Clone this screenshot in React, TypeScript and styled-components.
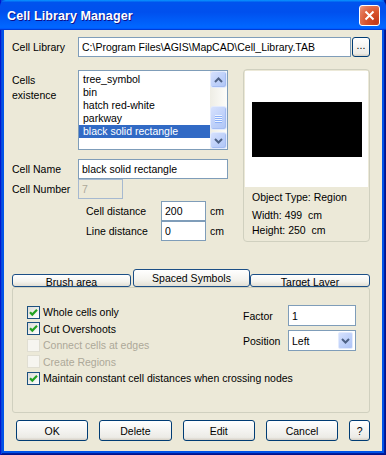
import React from 'react';
import styled, { createGlobalStyle } from 'styled-components';

const GlobalStyle = createGlobalStyle`
  html, body {
    margin: 0;
    padding: 0;
    background: #ffffff;
  }
  body {
    font-family: "Liberation Sans", Arial, sans-serif;
    font-size: 10.5px;
    color: #000000;
  }
`;

const cells = ['tree_symbol', 'bin', 'hatch red-white', 'parkway', 'black solid rectangle'];

const options = [
  { label: 'Whole cells only', checked: true, disabled: false },
  { label: 'Cut Overshoots', checked: true, disabled: false },
  { label: 'Connect cells at edges', checked: false, disabled: true },
  { label: 'Create Regions', checked: false, disabled: true },
];

function Check({ checked, disabled }: { checked: boolean; disabled?: boolean }) {
  return (
    <StCheckBox $disabled={disabled}>
      {checked && (
        <svg width="11" height="11" viewBox="0 0 11 11">
          <path d="M2 5.2 L4.3 7.6 L9 2.8" fill="none" stroke="#21a121" strokeWidth="2.2" />
        </svg>
      )}
    </StCheckBox>
  );
}

function Chevron({ up }: { up?: boolean }) {
  return (
    <svg width="9" height="6" viewBox="0 0 9 6">
      <path
        d={up ? 'M1 5 L4.5 1.5 L8 5' : 'M1 1 L4.5 4.5 L8 1'}
        fill="none"
        stroke="#4d6185"
        strokeWidth="2"
      />
    </svg>
  );
}

export default function App() {
  return (
    <>
      <GlobalStyle />
      <StWindow>
        <StTitleBar>
          <StTitle>Cell Library Manager</StTitle>
          <StClose>
            <svg width="11" height="11" viewBox="0 0 11 11">
              <path d="M1.5 1.5 L9.5 9.5 M9.5 1.5 L1.5 9.5" stroke="#ffffff" strokeWidth="2" />
            </svg>
          </StClose>
        </StTitleBar>

        <StBody>
          <StFieldRow>
            <StLabel $w={66}>Cell Library</StLabel>
            <StTextBox $w={273} defaultValue={'C:\\Program Files\\AGIS\\MapCAD\\Cell_Library.TAB'} />
            <StBrowse>...</StBrowse>
          </StFieldRow>

          <StMain>
            <StLeftCol>
              <StExistRow>
                <StTopLabel>
                  Cells
                  <br />
                  existence
                </StTopLabel>
                <StListBox>
                  <StListItems>
                    {cells.map((c, i) => (
                      <StListItem key={c} $selected={i === cells.length - 1}>
                        {c}
                      </StListItem>
                    ))}
                  </StListItems>
                  <StScrollBar>
                    <StScrollBtn>
                      <Chevron up />
                    </StScrollBtn>
                    <StScrollTrack>
                      <StThumb>
                        <StGrip />
                        <StGrip />
                        <StGrip />
                        <StGrip />
                      </StThumb>
                    </StScrollTrack>
                    <StScrollBtn>
                      <Chevron />
                    </StScrollBtn>
                  </StScrollBar>
                </StListBox>
              </StExistRow>

              <StNameRow>
                <StLabel $w={66}>Cell Name</StLabel>
                <StTextBox $w={150} defaultValue="black solid rectangle" />
              </StNameRow>
              <StFieldRow>
                <StLabel $w={66}>Cell Number</StLabel>
                <StTextBox $w={45} defaultValue="7" disabled />
              </StFieldRow>

              <StDistances>
                <StFieldRow>
                  <StLabel $w={75}>Cell distance</StLabel>
                  <StTextBox $w={45} defaultValue="200" />
                  <StUnit>cm</StUnit>
                </StFieldRow>
                <StFieldRow>
                  <StLabel $w={75}>Line distance</StLabel>
                  <StTextBox $w={45} defaultValue="0" />
                  <StUnit>cm</StUnit>
                </StFieldRow>
              </StDistances>
            </StLeftCol>

            <StPreview>
              <StCanvas>
                <StShape />
              </StCanvas>
              <StInfo>
                <StInfoType>Object Type: Region</StInfoType>
                <StInfoLine>Width: 499&nbsp; cm</StInfoLine>
                <StInfoLine>Height: 250&nbsp; cm</StInfoLine>
              </StInfo>
            </StPreview>
          </StMain>

          <StTabStrip>
            <StTab $w={119}>Brush area</StTab>
            <StTab $w={117} $active>
              Spaced Symbols
            </StTab>
            <StTab $w={120}>Target Layer</StTab>
          </StTabStrip>

          <StTabPanel>
            <StPanelTop>
              <StCheckColumn>
                {options.map((o) => (
                  <StCheckRow key={o.label} $disabled={o.disabled}>
                    <Check checked={o.checked} disabled={o.disabled} />
                    {o.label}
                  </StCheckRow>
                ))}
              </StCheckColumn>
              <StRightFields>
                <StFieldLabel>Factor</StFieldLabel>
                <StTextBox $w={68} $h={21} defaultValue="1" />
                <StFieldLabel>Position</StFieldLabel>
                <StSelect>
                  <StSelectText>Left</StSelectText>
                  <StDropBtn>
                    <Chevron />
                  </StDropBtn>
                </StSelect>
              </StRightFields>
            </StPanelTop>
            <StCheckRow>
              <Check checked />
              Maintain constant cell distances when crossing nodes
            </StCheckRow>
          </StTabPanel>

          <StButtonBar>
            <StPushButton $w={73}>OK</StPushButton>
            <StPushButton $w={73}>Delete</StPushButton>
            <StPushButton $w={73}>Edit</StPushButton>
            <StPushButton $w={73}>Cancel</StPushButton>
            <StPushButton $w={21}>?</StPushButton>
          </StButtonBar>
        </StBody>
      </StWindow>
    </>
  );
}

const StWindow = styled.div`
  width: 386px;
  height: 455px;
  display: flex;
  flex-direction: column;
  background: #0053e8;
  box-shadow: inset 1px 0 #0019cf, inset -1px 0 #00138c, inset 0 -1px #00138c, inset 2px 0 #0a46da,
    inset -2px 0 #001ea0, inset 0 -2px #001ea0;
  box-sizing: border-box;
`;

const StTitleBar = styled.div`
  height: 30px;
  flex: none;
  display: flex;
  align-items: center;
  justify-content: space-between;
  padding: 0 6px 0 7px;
  background: linear-gradient(
    180deg,
    #0997ff,
    #0053ee 8%,
    #0050ee 40%,
    #0066ff 88%,
    #0066ff 93%,
    #005bff 95%,
    #003dd7 96%,
    #003dd7
  );
  border-radius: 6px 6px 0 0;
`;

const StTitle = styled.div`
  color: #ffffff;
  font-weight: bold;
  font-size: 12.5px;
  letter-spacing: 0.1px;
  text-shadow: 1px 1px #0f1089;
  padding-top: 1px;
`;

const StClose = styled.div`
  width: 21px;
  height: 21px;
  box-sizing: border-box;
  display: flex;
  align-items: center;
  justify-content: center;
  border: 1px solid #ffffff;
  border-radius: 3px;
  background: radial-gradient(circle at 85% 85%, #c2391a 0%, #d9532c 45%, #e37a5c 80%, #eea58f 100%);
`;

const StBody = styled.div`
  flex: 1;
  margin: 0 4px 4px;
  padding: 7px 12px 0 8px;
  background: #ece9d8;
  display: flex;
  flex-direction: column;
`;

const StFieldRow = styled.div`
  display: flex;
  align-items: center;
`;

const StNameRow = styled(StFieldRow)`
  margin-top: 9px;
`;

const StLabel = styled.div<{ $w: number }>`
  width: ${(p) => p.$w}px;
  flex: none;
  white-space: nowrap;
`;

const StTopLabel = styled.div`
  width: 66px;
  flex: none;
  line-height: 15px;
  padding-top: 3px;
`;

const StTextBox = styled.input<{ $w: number; $h?: number }>`
  width: ${(p) => p.$w}px;
  height: ${(p) => p.$h ?? 20}px;
  box-sizing: border-box;
  border: 1px solid #7f9db9;
  background: #ffffff;
  padding: 0 3px;
  margin: 0;
  font: inherit;
  color: #000000;
  outline: none;

  &:disabled {
    background: #ece9d8;
    border-color: #a6b9d0;
    color: #aca899;
  }
`;

const StBrowse = styled.button`
  width: 18px;
  height: 20px;
  margin-left: 1px;
  padding: 0 0 3px;
  box-sizing: border-box;
  border: 1px solid #003c74;
  border-radius: 3px;
  background: linear-gradient(180deg, #ffffff, #ecebe6 86%, #d6d0c5);
  font: inherit;
  line-height: 1;
`;

const StMain = styled.div`
  display: flex;
  margin-top: 12px;
`;

const StLeftCol = styled.div`
  width: 216px;
  display: flex;
  flex-direction: column;
`;

const StExistRow = styled.div`
  display: flex;
  margin-top: 1px;
`;

const StListBox = styled.div`
  width: 150px;
  height: 80px;
  box-sizing: border-box;
  border: 1px solid #7f9db9;
  background: #ffffff;
  display: flex;
`;

const StListItems = styled.div`
  flex: 1;
  padding-top: 2px;
`;

const StListItem = styled.div<{ $selected?: boolean }>`
  height: 13px;
  line-height: 13px;
  padding-left: 4px;
  white-space: nowrap;
  background: ${(p) => (p.$selected ? '#316ac5' : 'transparent')};
  color: ${(p) => (p.$selected ? '#ffffff' : '#000000')};
`;

const StScrollBar = styled.div`
  width: 17px;
  display: flex;
  flex-direction: column;
  background: linear-gradient(90deg, #eeede5, #fdfdfa);
`;

const StScrollBtn = styled.div`
  height: 17px;
  box-sizing: border-box;
  display: flex;
  align-items: center;
  justify-content: center;
  border: 1px solid #e3ebfd;
  border-radius: 3px;
  background: linear-gradient(135deg, #d6e1fd, #bccff9 60%, #b0c6f6);
  box-shadow: inset -1px -1px #a5bdf2;
`;

const StScrollTrack = styled.div`
  flex: 1;
  padding-top: 18px;
`;

const StThumb = styled(StScrollBtn)`
  height: 24px;
  flex-direction: column;
  gap: 1px;
`;

const StGrip = styled.div`
  width: 7px;
  height: 1px;
  background: #eef4fe;
  box-shadow: 0 1px #8cb0f8;
`;

const StDistances = styled.div`
  margin: 2px 0 0 74px;
  display: flex;
  flex-direction: column;
`;

const StUnit = styled.div`
  margin-left: 4px;
`;

const StPreview = styled.div`
  width: 127px;
  height: 173px;
  margin-left: 15px;
  box-sizing: border-box;
  border: 1px solid #d0d0bf;
  border-radius: 4px;
  padding: 1px;
`;

const StCanvas = styled.div`
  height: 116px;
  background: #ffffff;
  display: flex;
  align-items: center;
  justify-content: center;
`;

const StShape = styled.div`
  width: 110px;
  height: 55px;
  background: #000000;
`;

const StInfo = styled.div`
  padding-left: 7px;
`;

const StInfoType = styled.div`
  line-height: 13px;
  margin: 4px 0;
`;

const StInfoLine = styled.div`
  line-height: 15px;
`;

const StTabStrip = styled.div`
  display: flex;
  align-items: flex-end;
  height: 18px;
  margin-top: 27px;
`;

const StTab = styled.div<{ $w: number; $active?: boolean }>`
  width: ${(p) => p.$w}px;
  height: ${(p) => (p.$active ? 18 : 13)}px;
  margin-left: ${(p) => (p.$active ? 2 : 0)}px;
  box-sizing: border-box;
  border: 1px solid #1c4f86;
  border-radius: 3px;
  background: linear-gradient(180deg, #ffffff, #f4f3ee 60%, #e2dfd4);
  text-align: center;
  line-height: 15px;
  padding-top: ${(p) => (p.$active ? 1 : 0)}px;
  overflow: hidden;
  white-space: nowrap;
`;

const StTabPanel = styled.div`
  width: 358px;
  height: 126px;
  box-sizing: border-box;
  border: 1px solid #d0d0bf;
  border-radius: 3px;
  padding: 16px 13px 0 14px;
`;

const StPanelTop = styled.div`
  display: flex;
  justify-content: space-between;
`;

const StCheckColumn = styled.div`
  width: 216px;
`;

const StCheckRow = styled.div<{ $disabled?: boolean }>`
  height: 16.5px;
  display: flex;
  align-items: center;
  white-space: nowrap;
  color: ${(p) => (p.$disabled ? '#aca899' : '#000000')};
`;

const StCheckBox = styled.span<{ $disabled?: boolean }>`
  width: 13px;
  height: 13px;
  flex: none;
  box-sizing: border-box;
  margin-right: 3px;
  display: flex;
  align-items: center;
  justify-content: center;
  border: 1px solid ${(p) => (p.$disabled ? '#e0ded2' : '#1c5180')};
  background: ${(p) => (p.$disabled ? '#f6f5f0' : 'linear-gradient(135deg, #dcdcd7, #ffffff)')};
`;

const StRightFields = styled.div`
  display: grid;
  grid-template-columns: 45px 68px;
  grid-auto-rows: 21px;
  row-gap: 4px;
  align-items: center;
  margin-top: 1px;
`;

const StFieldLabel = styled.div`
  white-space: nowrap;
`;

const StSelect = styled.div`
  height: 21px;
  box-sizing: border-box;
  border: 1px solid #7f9db9;
  background: #ffffff;
  display: flex;
  align-items: center;
  padding: 1px 2px 1px 3px;
`;

const StSelectText = styled.div`
  flex: 1;
`;

const StDropBtn = styled.div`
  width: 15px;
  height: 17px;
  box-sizing: border-box;
  display: flex;
  align-items: center;
  justify-content: center;
  border: 1px solid #e3ebfd;
  border-radius: 2px;
  background: linear-gradient(135deg, #d6e1fd, #bccff9 60%, #aec3f5);
`;

const StButtonBar = styled.div`
  display: flex;
  gap: 11px;
  margin-top: 7px;
  padding-left: 4px;
`;

const StPushButton = styled.button<{ $w: number }>`
  width: ${(p) => p.$w}px;
  height: 21px;
  padding: 0;
  box-sizing: border-box;
  border: 1px solid #003c74;
  border-radius: 3px;
  background: linear-gradient(180deg, #ffffff, #ecebe6 86%, #d6d0c5);
  font: inherit;
  color: #000000;
`;
